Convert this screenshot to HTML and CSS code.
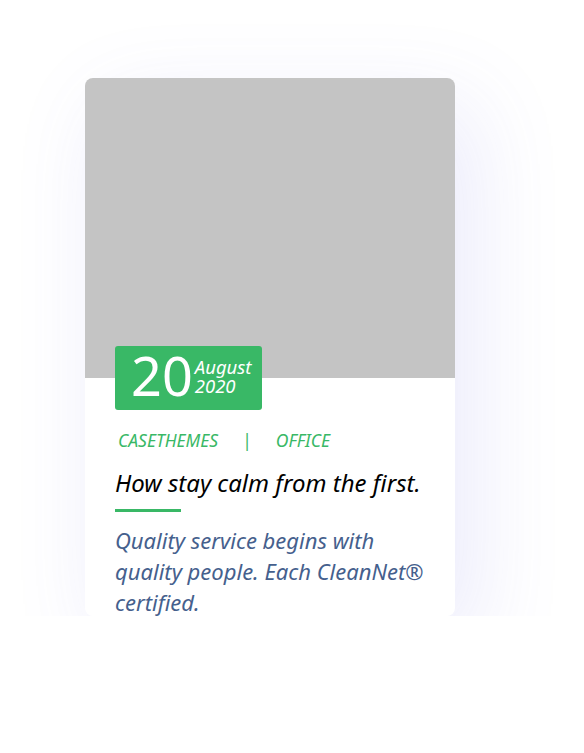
FILE: index.html
```html
<!DOCTYPE html>
<html>
<head>
<meta charset="utf-8">
<link rel="stylesheet" href="styles.css">
</head>
<body>
<div class="page">
  <article class="card">
    <div class="thumb"></div>
    <div class="body">
      <div class="date">
        <span class="day">20</span>
        <span class="my"><span class="month">August</span><span class="year">2020</span></span>
      </div>
      <div class="meta">
        <span>CASETHEMES</span>
        <span class="sep">|</span>
        <span>OFFICE</span>
      </div>
      <h3 class="title">How stay calm from the first.</h3>
      <div class="line"></div>
      <p class="desc">Quality service begins with quality people. Each CleanNet® certified.</p>
    </div>
  </article>
</div>
</body>
</html>
```
FILE: styles.css
```css
html, body {
  margin: 0;
  padding: 0;
  background: #ffffff;
}
.page {
  padding: 78px 0 0 85px;
  font-family: "Noto Sans", sans-serif;
  font-style: italic;
}
.card {
  width: 370px;
  height: 538px;
  background: #fff;
  border-radius: 8px;
  overflow: hidden;
  box-shadow: 18px 28px 90px rgba(90, 90, 225, 0.13);
}
.thumb {
  height: 300px;
  background: #c4c4c4;
}
.body {
  padding: 0 30px;
}
.date {
  display: flex;
  align-items: flex-start;
  margin-top: -32px;
  height: 64px;
  width: 147px;
  box-sizing: border-box;
  padding-left: 16px;
  background: #39b866;
  color: #fff;
  border-radius: 3px;
}
.day {
  font-size: 54px;
  line-height: 64px;
  height: 64px;
  margin-top: -3px;
  font-style: normal;
}
.my {
  display: flex;
  flex-direction: column;
  font-size: 18.5px;
  line-height: 19px;
  margin-top: 11px;
  margin-left: 2px;
}
.meta {
  display: flex;
  gap: 24px;
  margin-top: 18px;
  padding-left: 3px;
  color: #39b866;
  font-size: 17.5px;
  line-height: 24px;
}
.sep {
  font-style: normal;
}
.title {
  margin: 15px 0 0;
  font-weight: normal;
  font-size: 24px;
  line-height: 32px;
  color: #000;
}
.line {
  width: 66px;
  height: 3px;
  background: #39b866;
  margin-top: 10px;
}
.desc {
  margin: 13px 0 0;
  font-size: 22px;
  line-height: 31px;
  color: #45608d;
}
```
